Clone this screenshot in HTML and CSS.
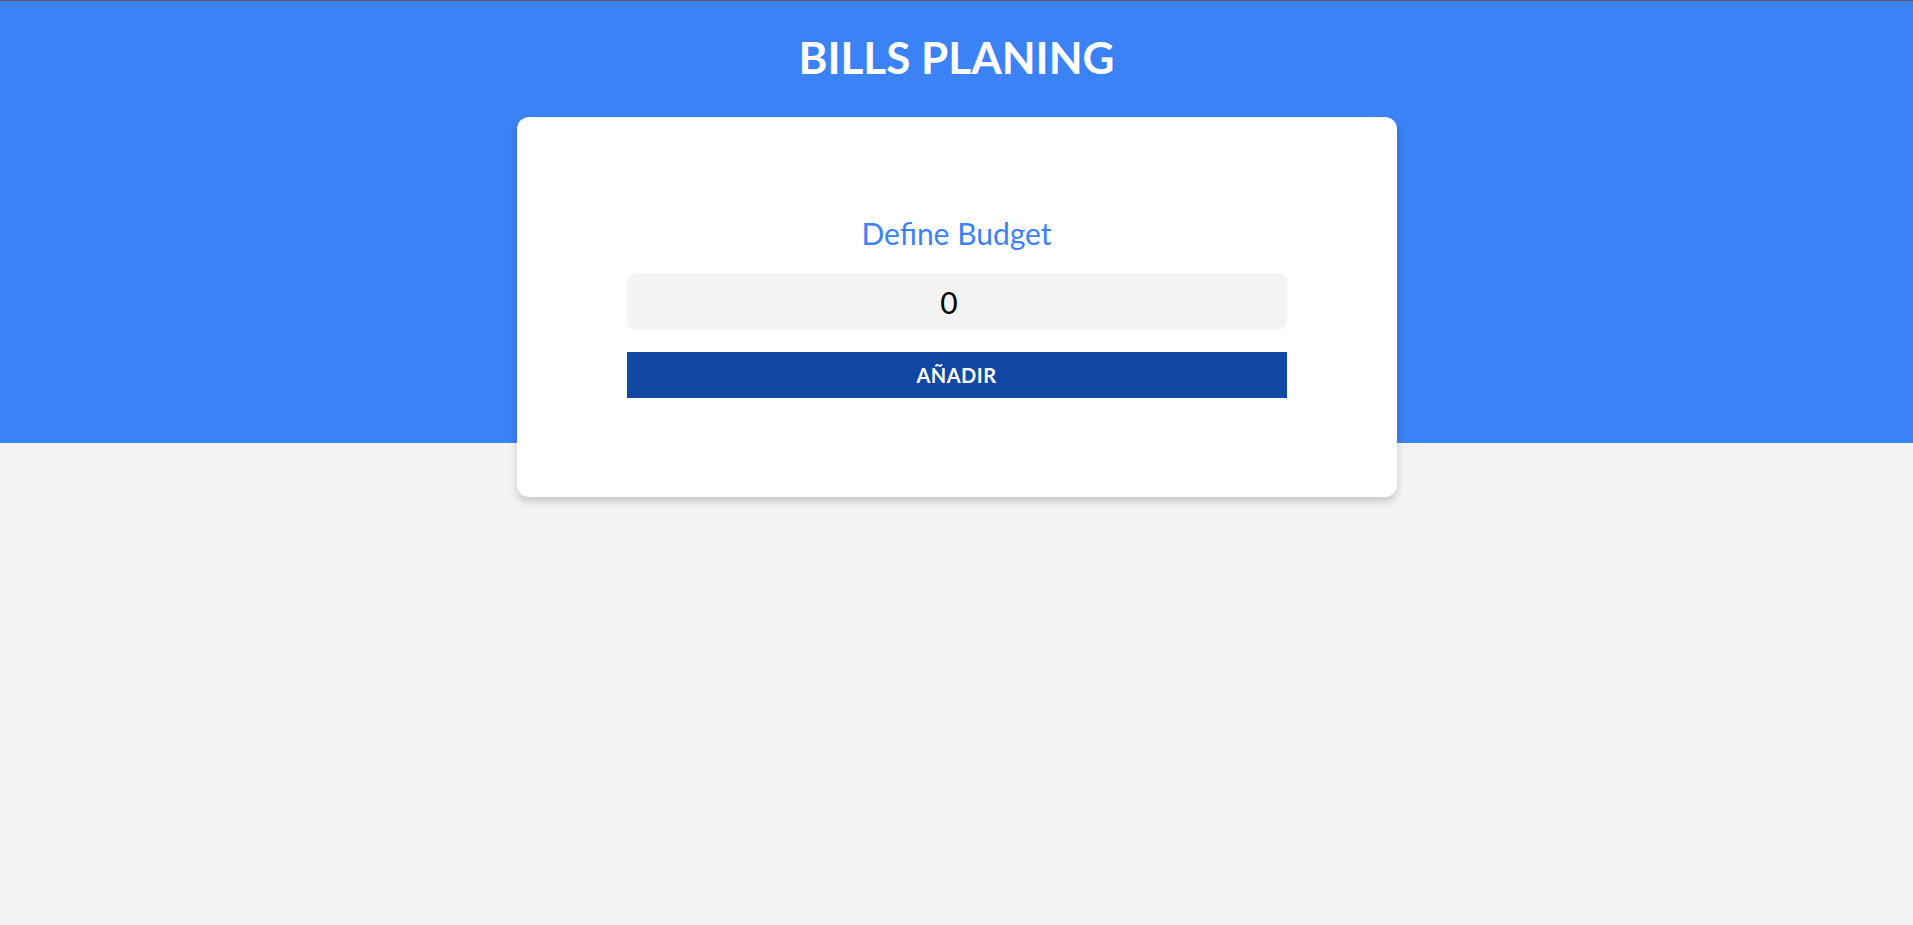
FILE: index.html
```html
<!DOCTYPE html>
<html lang="es">
<head>
<meta charset="utf-8">
<title>Bills Planing</title>
<link rel="stylesheet" href="styles.css">
</head>
<body>
<div class="page">
  <header class="header">
    <h1 class="title">BILLS PLANING</h1>
    <div class="card">
      <form class="budget-form">
        <label class="label" for="budget">Define Budget</label>
        <input class="input" id="budget" type="number" value="0">
        <button type="button" class="btn">AÑADIR</button>
      </form>
    </div>
  </header>
</div>
</body>
</html>
```
FILE: styles.css
```css
* { box-sizing: border-box; }
html, body { margin: 0; padding: 0; }
body {
  font-family: Lato, "Noto Sans", sans-serif;
  background: #f4f4f4;
}
.page {
  min-height: 100vh;
  border-top: 1px solid #5c5c5c;
  background: linear-gradient(to bottom, #3b82f6 0, #3b82f6 442px, #f4f4f4 442px);
}
.header {
  display: flex;
  flex-direction: column;
  align-items: center;
  padding-top: 30px;
}
.title {
  margin: 0;
  font-size: 44px;
  font-weight: 700;
  line-height: normal;
  color: #fff;
  text-align: center;
}
.card {
  margin-top: 34px;
  width: 880px;
  background: #fff;
  border-radius: 12px;
  box-shadow: 0 5px 8px rgba(0, 0, 0, 0.18);
  padding: 98px 110px 99px;
}
.budget-form {
  display: flex;
  flex-direction: column;
  align-items: stretch;
}
.label {
  display: block;
  text-align: center;
  font-size: 30px;
  line-height: normal;
  color: #3b82f6;
  margin-bottom: 22px;
}
.input {
  height: 57px;
  border: none;
  border-radius: 9px;
  background: #f4f4f4;
  font-family: Lato, sans-serif;
  font-size: 30px;
  text-align: center;
  color: #000;
  padding: 0 10px;
  outline: none;
}
.btn {
  margin-top: 22px;
  height: 46px;
  border: none;
  background: #1148a3;
  color: #fff;
  font-family: Lato, sans-serif;
  font-weight: 700;
  font-size: 20px;
  letter-spacing: 0.5px;
  text-transform: uppercase;
  cursor: pointer;
}
```
